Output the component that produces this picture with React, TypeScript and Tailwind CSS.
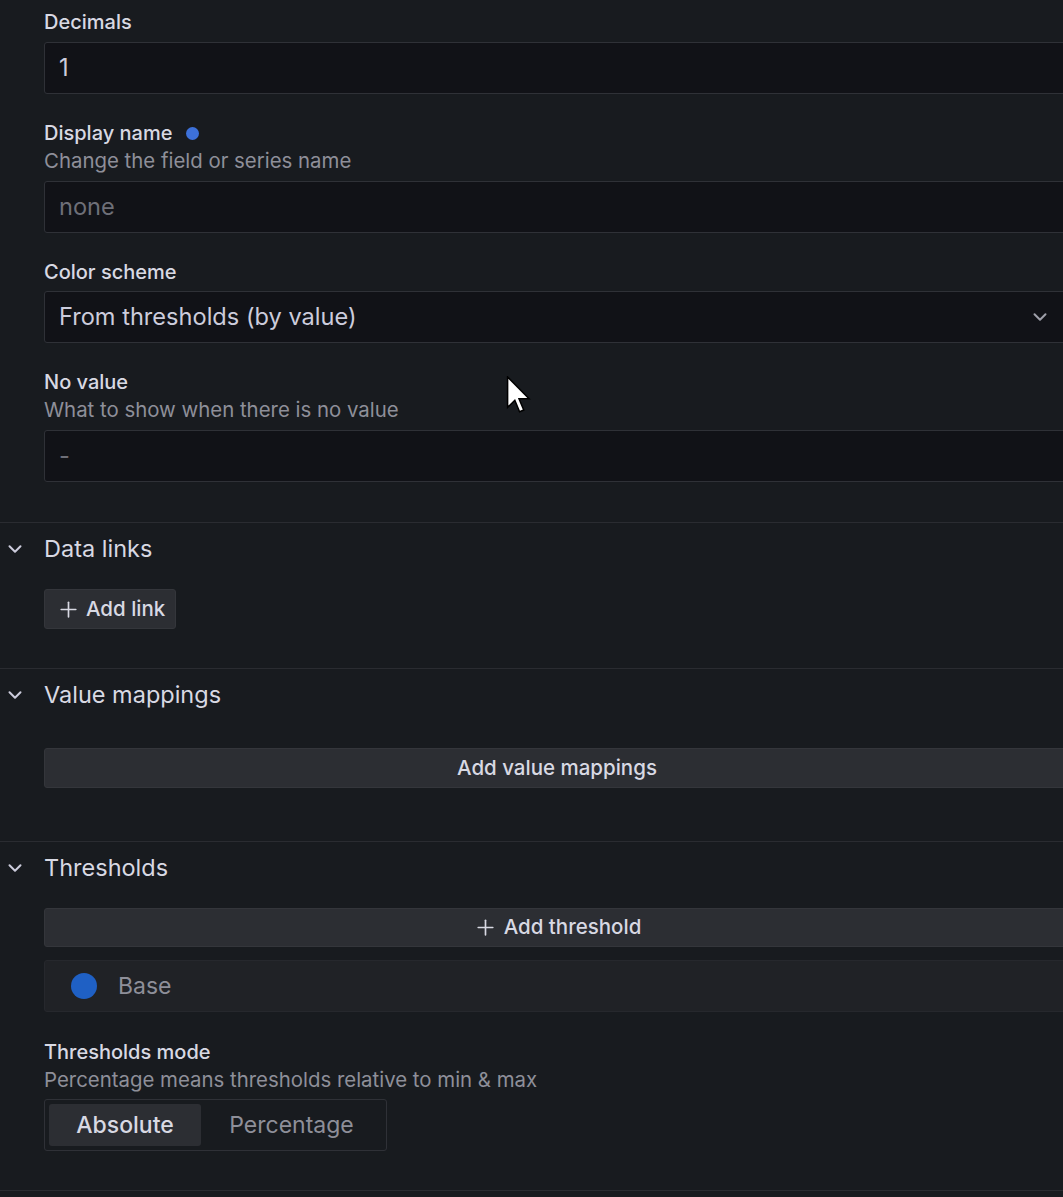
import { ChevronDown, Plus } from "lucide-react"

const font = { fontFamily: "Inter, 'Noto Sans', sans-serif" }

function Label({ children, dot }: { children: React.ReactNode; dot?: boolean }) {
  return (
    <div className="flex items-center h-[28px] text-[20px] font-medium text-[#d8d9e3]">
      {children}
      {dot && <span className="ml-[14px] h-[13px] w-[13px] rounded-full bg-[#3d71d9]" />}
    </div>
  )
}

function Description({ children }: { children: React.ReactNode }) {
  return <div className="flex items-center h-[28px] text-[20.4px] text-[#8e8f99]">{children}</div>
}

function TextInput({ value, placeholder, className = "" }: { value?: string; placeholder?: string; className?: string }) {
  return (
    <div
      className={`flex items-center h-[52px] w-[1022px] rounded-[3px] border border-[#2f3137] bg-[#111217] px-[14px] text-[23.6px] ${className}`}
    >
      {value ? (
        <span className="text-[#ccccdc]">{value}</span>
      ) : (
        <span className="text-[#6e6f78]">{placeholder}</span>
      )}
    </div>
  )
}

function SectionHeader({ title }: { title: string }) {
  return (
    <div className="flex items-center h-[52px]">
      <div className="w-[30px] flex justify-center">
        <ChevronDown className="h-[22px] w-[22px] text-[#ccccdc]" strokeWidth={2.2} />
      </div>
      <span className="ml-[14px] text-[23.5px] text-[#d8d9e3]">{title}</span>
    </div>
  )
}

function Cursor() {
  return (
    <svg
      className="absolute left-[506px] top-[376px]"
      width="26"
      height="38"
      viewBox="0 0 13 20"
    >
      <path
        d="M0.5 0.5 L0.5 16.5 L4.3 12.8 L6.8 18.8 L9 17.9 L6.5 12 L11.8 12 Z"
        fill="#ffffff"
        stroke="#000000"
        strokeWidth="0.8"
        strokeLinejoin="miter"
      />
    </svg>
  )
}

export default function App() {
  return (
    <div className="relative w-[1063px] h-[1197px] overflow-hidden bg-[#181b1f]" style={font}>
      {/* Standard options (tail) */}
      <div className="pl-[44px] pt-[8px] pb-[40px] border-b border-[#2a2c31]">
        <Label>Decimals</Label>
        <TextInput value="1" className="mt-[6px]" />

        <div className="mt-[25px]">
          <Label dot>Display name</Label>
          <Description>Change the field or series name</Description>
        </div>
        <TextInput placeholder="none" className="mt-[6px]" />

        <div className="mt-[25px]">
          <Label>Color scheme</Label>
        </div>
        <div className="mt-[5px] flex items-center h-[52px] w-[1022px] rounded-[3px] border border-[#2f3137] bg-[#111217] pl-[14px] pr-[14px] text-[23.6px] text-[#ccccdc]">
          <span>From thresholds (by value)</span>
          <ChevronDown className="ml-auto h-[22px] w-[22px] text-[#9fa0aa]" strokeWidth={2.2} />
        </div>

        <div className="mt-[25px]">
          <Label>No value</Label>
          <Description>What to show when there is no value</Description>
        </div>
        <TextInput placeholder="-" className="mt-[6px]" />
      </div>

      {/* Data links */}
      <div className="pb-[39px] border-b border-[#2a2c31]">
        <SectionHeader title="Data links" />
        <div className="pl-[44px] mt-[14px]">
          <button className="flex items-center gap-[5px] h-[40px] pl-[11px] pr-[10px] rounded-[3px] border border-[#34363b] bg-[#2c2e33] text-[20.5px] font-medium text-[#d8d9e3]">
            <Plus className="h-[25px] w-[25px]" strokeWidth={1.6} />
            Add link
          </button>
        </div>
      </div>

      {/* Value mappings */}
      <div className="pb-[53px] border-b border-[#2a2c31]">
        <SectionHeader title="Value mappings" />
        <div className="pl-[44px] mt-[27px]">
          <button className="flex items-center justify-center h-[40px] w-[1026px] rounded-[3px] border border-[#34363b] bg-[#2c2e33] text-[20.5px] font-medium text-[#d8d9e3]">
            Add value mappings
          </button>
        </div>
      </div>

      {/* Thresholds */}
      <div className="pb-[39px] border-b border-[#2a2c31]">
        <SectionHeader title="Thresholds" />
        <div className="pl-[44px]">
          <button className="mt-[14px] flex items-center justify-center gap-[6px] h-[39px] w-[1026px] rounded-[3px] border border-[#34363b] bg-[#2c2e33] text-[20.5px] font-medium text-[#d8d9e3]">
            <Plus className="h-[25px] w-[25px]" strokeWidth={1.6} />
            Add threshold
          </button>

          <div className="mt-[13px] flex items-center h-[52px] w-[1026px] rounded-[3px] border border-[#26282d] bg-[#202226] pl-[26px]">
            <span className="h-[26px] w-[26px] rounded-full bg-[#1f60c4]" />
            <span className="ml-[21px] text-[23px] text-[#8e8f99]">Base</span>
          </div>

          <div className="mt-[26px]">
            <Label>Thresholds mode</Label>
            <Description>Percentage means thresholds relative to min &amp; max</Description>
          </div>
          <div className="mt-[5px] inline-flex items-center h-[52px] w-[343px] rounded-[3px] border border-[#2f3137] p-[4px] text-[23px]">
            <div className="flex items-center justify-center h-[42px] w-[152px] rounded-[3px] bg-[#2c2e33] font-medium text-[#d8d9e3]">
              Absolute
            </div>
            <div className="flex flex-1 items-center justify-center h-[42px] text-[#8e8f99]">Percentage</div>
          </div>
        </div>
      </div>

      <Cursor />
    </div>
  )
}
